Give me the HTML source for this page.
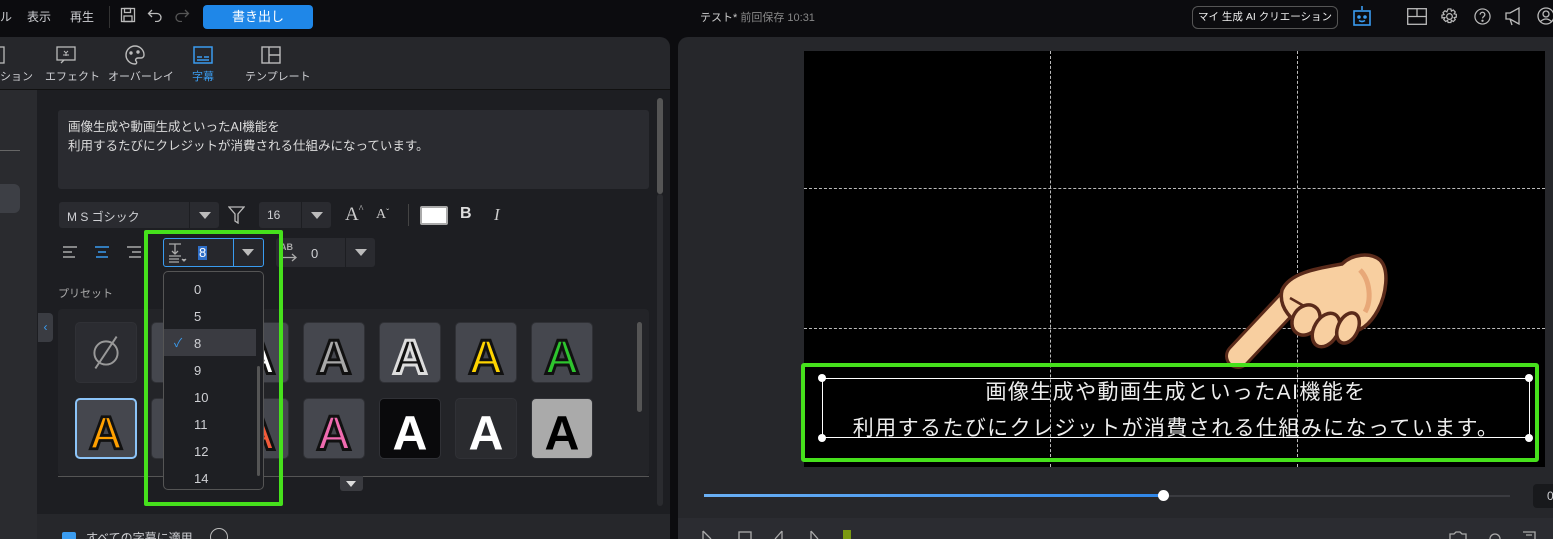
<!DOCTYPE html>
<html><head><meta charset="utf-8">
<style>
*{margin:0;padding:0;box-sizing:border-box}
html,body{width:1553px;height:539px;overflow:hidden}
body{background:#0c0c0f;font-family:"Liberation Sans","Noto Sans CJK JP",sans-serif;color:#ddd;position:relative}
.a{position:absolute}
.t{font-size:12px;color:#cfd0d4;white-space:nowrap}
.box{background:#2a2b30;border-radius:3px}
.tile{position:absolute;width:62px;height:61px;border-radius:5px;background:#45474e;border:1px solid #303136}
.tile svg{width:100%;height:100%}
</style></head><body>
<!-- top bar -->
<div class="a t" style="left:0;top:8px;font-size:12px">ル</div>
<div class="a t" style="left:27px;top:8px">表示</div>
<div class="a t" style="left:70px;top:8px">再生</div>
<div class="a" style="left:109px;top:6px;width:1px;height:22px;background:#333"></div>
<svg class="a" style="left:120px;top:7px" width="16" height="16" viewBox="0 0 16 16" fill="none" stroke="#bbb" stroke-width="1.3"><rect x="1.5" y="1.5" width="13" height="13"/><rect x="4.5" y="1.5" width="6" height="4"/><rect x="4" y="9" width="8" height="5.5"/></svg>
<svg class="a" style="left:147px;top:8px" width="16" height="14" viewBox="0 0 16 14" fill="none" stroke="#bbb" stroke-width="1.3"><path d="M5 2L1.5 5.5 5 9M1.5 5.5H10a4 4 0 010 8H8"/></svg>
<svg class="a" style="left:174px;top:8px" width="16" height="14" viewBox="0 0 16 14" fill="none" stroke="#555" stroke-width="1.3"><path d="M11 2l3.5 3.5L11 9M14.5 5.5H6a4 4 0 000 8h2"/></svg>
<div class="a" style="left:203px;top:5px;width:110px;height:24px;background:#1f87e8;border-radius:4px;color:#fff;font-size:13px;text-align:center;line-height:24px">書き出し</div>
<div class="a t" style="left:700px;top:9px;font-size:11px;color:#ccc">テスト* <span style="color:#888">前回保存 10:31</span></div>
<div class="a" style="left:1192px;top:6px;width:146px;height:23px;border:1px solid #555;border-radius:6px;font-size:10.5px;color:#eee;text-align:center;line-height:21px;white-space:nowrap;overflow:hidden">マイ 生成 AI クリエーション</div>
<svg class="a" style="left:1352px;top:5px" width="20" height="22" viewBox="0 0 20 22" fill="none" stroke="#3a9cf0" stroke-width="1.6"><path d="M10 1v4"/><rect x="2" y="6" width="16" height="14"/><circle cx="7" cy="12" r="1" fill="#3a9cf0"/><circle cx="13" cy="12" r="1" fill="#3a9cf0"/><path d="M7 15.5q3 2 6 0"/></svg>
<svg class="a" style="left:1407px;top:8px" width="20" height="17" viewBox="0 0 20 17" fill="none" stroke="#bbb" stroke-width="1.3"><rect x="0.7" y="0.7" width="18.6" height="15.6"/><path d="M0.7 8.5h18.6M10 0.7v7.8"/></svg>
<svg class="a" style="left:1441px;top:8px" width="17" height="17" viewBox="0 0 18 18" fill="none" stroke="#bbb" stroke-width="1.3"><circle cx="9" cy="9" r="3"/><path d="M7.5 1h3l.5 2.3 2-1.2 2.1 2.1-1.2 2 2.3.5v3l-2.3.5 1.2 2-2.1 2.1-2-1.2-.5 2.3h-3l-.5-2.3-2 1.2-2.1-2.1 1.2-2L1 10.5v-3l2.3-.5-1.2-2 2.1-2.1 2 1.2z"/></svg>
<svg class="a" style="left:1474px;top:8px" width="17" height="17" viewBox="0 0 18 18" fill="none" stroke="#bbb" stroke-width="1.3"><circle cx="9" cy="9" r="8"/><path d="M6.5 7a2.5 2.5 0 115 0c0 2-2.5 2-2.5 4"/><circle cx="9" cy="13.5" r=".6" fill="#bbb"/></svg>
<svg class="a" style="left:1504px;top:7px" width="20" height="19" viewBox="0 0 20 19" fill="none" stroke="#bbb" stroke-width="1.3"><path d="M2 6h4l9-5v16l-9-5H2zM6 12l2 6"/></svg>
<svg class="a" style="left:1537px;top:7px" width="18" height="18" viewBox="0 0 18 18" fill="none" stroke="#bbb" stroke-width="1.3"><circle cx="9" cy="9" r="8"/><circle cx="9" cy="7" r="3"/><path d="M3.5 14.5q5.5-5 11 0"/></svg>

<!-- left panel -->
<div class="a" style="left:0;top:37px;width:670px;height:502px;background:#26272b;border-radius:0 10px 0 0"></div>
<div class="a" style="left:0;top:89px;width:670px;height:1px;background:#111"></div>
<div class="a" style="left:0;top:90px;width:37px;height:449px;background:#2a2b2f"></div>
<div class="a" style="left:0;top:150px;width:20px;height:1px;background:#666"></div>
<div class="a" style="left:0;top:184px;width:20px;height:29px;background:#3d3f45;border-radius:0 6px 6px 0"></div>
<div class="a" style="left:37px;top:90px;width:633px;height:424px;background:#1d1e22"></div>
<div class="a" style="left:37px;top:514px;width:633px;height:25px;background:#26272b"></div>
<!-- tabs -->
<svg class="a" style="left:0;top:46px" width="6" height="18"><rect x="-6" y="1" width="10" height="16" fill="none" stroke="#bbb" stroke-width="1.3"/></svg>
<div class="a t" style="left:0;top:68px;font-size:11px">ション</div>
<svg class="a" style="left:56px;top:46px" width="20" height="18" viewBox="0 0 20 18" fill="none" stroke="#bbb" stroke-width="1.3"><rect x="1" y="1" width="18" height="13"/><path d="M5 17l3-3"/><path d="M8 5l2 2 2-2M10 7v3M7 9h6" stroke-width="1"/></svg>
<div class="a t" style="left:45px;top:68px;font-size:11px">エフェクト</div>
<svg class="a" style="left:125px;top:45px" width="20" height="20" viewBox="0 0 20 20" fill="none" stroke="#bbb" stroke-width="1.4"><path d="M10 1a9 9 0 100 18c2 0 2-2 1-3s0-3 2-3h3a3 3 0 003-3 9 9 0 00-9-9z"/><circle cx="6" cy="8" r="1" fill="#bbb"/><circle cx="13" cy="7" r="1" fill="#bbb"/></svg>
<div class="a t" style="left:108px;top:68px;font-size:11px">オーバーレイ</div>
<svg class="a" style="left:193px;top:46px" width="20" height="18" viewBox="0 0 20 18" fill="none" stroke="#3a9cf0" stroke-width="1.5"><rect x="1" y="1" width="18" height="16"/><path d="M4 11h5M11 11h5M4 14h12"/></svg>
<div class="a t" style="left:192px;top:68px;font-size:11px;color:#3a9cf0">字幕</div>
<svg class="a" style="left:261px;top:46px" width="20" height="18" viewBox="0 0 20 18" fill="none" stroke="#bbb" stroke-width="1.4"><rect x="1" y="1" width="18" height="16"/><path d="M8 1v16M8 9h11"/></svg>
<div class="a t" style="left:245px;top:68px;font-size:11px">テンプレート</div>
<!-- scrollbar -->
<div class="a" style="left:657px;top:98px;width:6px;height:96px;background:#555;border-radius:3px"></div>
<div class="a" style="left:657px;top:194px;width:6px;height:312px;background:#2a2b2f;border-radius:3px"></div>
<!-- textarea -->
<div class="a box" style="left:58px;top:110px;width:591px;height:79px"></div>
<div class="a" style="left:68px;top:118px;font-size:12.5px;line-height:19px;color:#ddd">画像生成や動画生成といったAI機能を<br>利用するたびにクレジットが消費される仕組みになっています。</div>
<!-- font row -->
<div class="a box" style="left:59px;top:202px;width:160px;height:26px"></div>
<div class="a" style="left:189px;top:202px;width:1px;height:26px;background:#1d1e22"></div>
<div class="a t" style="left:67px;top:208px;font-size:12px">M S ゴシック</div>
<div class="a" style="left:199px;top:212px;border:6px solid transparent;border-top:7px solid #bbb;border-bottom:0"></div>
<svg class="a" style="left:228px;top:206px" width="17" height="18" viewBox="0 0 17 18" fill="none" stroke="#bbb" stroke-width="1.3"><path d="M1 1h15l-6 7v9l-3-2V8z"/></svg>
<div class="a box" style="left:259px;top:202px;width:72px;height:26px"></div>
<div class="a" style="left:301px;top:202px;width:1px;height:26px;background:#1d1e22"></div>
<div class="a t" style="left:267px;top:208px">16</div>
<div class="a" style="left:311px;top:212px;border:6px solid transparent;border-top:7px solid #bbb;border-bottom:0"></div>
<div class="a" style="left:345px;top:204px;font-family:'Liberation Serif',serif;font-size:19px;color:#ccc">A<span style="font-size:10px;vertical-align:top">^</span></div>
<div class="a" style="left:376px;top:207px;font-family:'Liberation Serif',serif;font-size:14px;color:#ccc">A<span style="font-size:9px;vertical-align:top">ˇ</span></div>
<div class="a" style="left:408px;top:204px;width:1px;height:22px;background:#444"></div>
<div class="a" style="left:420px;top:206px;width:28px;height:19px;border:2px solid #aaa;background:#fff;border-radius:2px"></div>
<div class="a" style="left:460px;top:205px;font-size:16px;color:#ddd;font-weight:bold">B</div>
<div class="a" style="left:494px;top:205px;font-family:'Liberation Serif',serif;font-size:17px;color:#ccc;font-style:italic">I</div>
<!-- align row -->
<svg class="a" style="left:62px;top:245px" width="16" height="14" stroke="#aaa" stroke-width="1.5"><path d="M1 2h14M1 7h9M1 12h12"/></svg>
<svg class="a" style="left:94px;top:245px" width="16" height="14" stroke="#3a9cf0" stroke-width="1.5"><path d="M1 2h14M4 7h8M2 12h12"/></svg>
<svg class="a" style="left:126px;top:245px" width="16" height="14" stroke="#aaa" stroke-width="1.5"><path d="M1 2h14M6 7h9M3 12h12"/></svg>
<div class="a" style="left:163px;top:238px;width:101px;height:29px;border:1px solid #3a9cf0;border-radius:3px;background:#26272c"></div>
<div class="a" style="left:233px;top:239px;width:1px;height:27px;background:#3a9cf0"></div>
<svg class="a" style="left:168px;top:242px" width="20" height="22" stroke="#aaa" stroke-width="1.3" fill="none"><path d="M1 2h12M7 2v10M4 9l3 3 3-3M1 14h12M1 17h10M1 20h10"/><path d="M14 17l2 2 2-2" fill="#aaa"/></svg>
<div class="a" style="left:198px;top:246px;font-size:13px;background:#2f6fc8;color:#fff;line-height:14px;padding:0 1px">8</div>
<div class="a" style="left:242px;top:249px;border:6px solid transparent;border-top:7px solid #bbb;border-bottom:0"></div>
<div class="a box" style="left:276px;top:238px;width:99px;height:29px"></div>
<div class="a" style="left:345px;top:238px;width:1px;height:29px;background:#1d1e22"></div>
<div class="a" style="left:280px;top:242px;font-size:9px;color:#aaa;font-weight:bold">AB</div>
<svg class="a" style="left:280px;top:253px" width="18" height="9" stroke="#aaa" stroke-width="1.3" fill="none"><path d="M0 4.5h16M12 1l4 3.5-4 3.5"/></svg>
<div class="a t" style="left:311px;top:246px;font-size:13px">0</div>
<div class="a" style="left:355px;top:249px;border:6px solid transparent;border-top:7px solid #bbb;border-bottom:0"></div>
<div class="a t" style="left:58px;top:285px;font-size:11px;color:#aaa">プリセット</div>
<!-- presets -->
<div class="a" style="left:58px;top:309px;width:591px;height:167px;background:#232428;border-radius:4px"></div>
<div class="a" style="left:58px;top:476px;width:591px;height:1px;background:#555"></div>
<div class="a" style="left:340px;top:476px;width:23px;height:15px;background:#3a3b40;border-radius:0 0 3px 3px"></div>
<div class="a" style="left:346px;top:481px;border:5px solid transparent;border-top:6px solid #ddd;border-bottom:0"></div>
<div class="a" style="left:38px;top:313px;width:15px;height:29px;background:#3a3c42;border-radius:0 4px 4px 0;color:#3a9cf0;font-size:12px;text-align:center;line-height:29px">‹</div>
<div class="a" style="left:637px;top:322px;width:5px;height:90px;background:#555;border-radius:3px"></div>
<div class="tile" style="left:75px;top:322px;background:#2b2c31"><svg viewBox="0 0 62 61"><circle cx="31" cy="31" r="12" fill="none" stroke="#999" stroke-width="2"/><path d="M20 47L42 14" stroke="#999" stroke-width="2"/></svg></div>
<div class="tile" style="left:151px;top:322px"></div>
<div class="tile" style="left:227px;top:322px"><svg viewBox="0 0 62 61"><text x="31" y="52" text-anchor="middle" font-family="Liberation Sans" font-weight="bold" font-size="50" fill="#fff" stroke="#111" stroke-width="3">A</text></svg></div>
<div class="tile" style="left:303px;top:322px"><svg viewBox="0 0 62 61"><text x="31" y="52" text-anchor="middle" font-family="Liberation Sans" font-weight="bold" font-size="50" fill="#a8a8a8" stroke="#111" stroke-width="3">A</text></svg></div>
<div class="tile" style="left:379px;top:322px"><svg viewBox="0 0 62 61"><text x="31" y="52" text-anchor="middle" font-family="Liberation Sans" font-weight="bold" font-size="50" fill="#111" stroke="#ddd" stroke-width="3">A</text></svg></div>
<div class="tile" style="left:455px;top:322px"><svg viewBox="0 0 62 61"><text x="31" y="52" text-anchor="middle" font-family="Liberation Sans" font-weight="bold" font-size="50" fill="#ffd400" stroke="#111" stroke-width="3">A</text></svg></div>
<div class="tile" style="left:531px;top:322px"><svg viewBox="0 0 62 61"><text x="31" y="52" text-anchor="middle" font-family="Liberation Sans" font-weight="bold" font-size="50" fill="#2ec52e" stroke="#111" stroke-width="3">A</text></svg></div>
<div class="tile" style="left:75px;top:398px;border:2px solid #8cc4f8"><svg viewBox="0 0 62 61"><text x="31" y="52" text-anchor="middle" font-family="Liberation Sans" font-weight="bold" font-size="50" fill="#ffa000" stroke="#111" stroke-width="3">A</text></svg></div>
<div class="tile" style="left:151px;top:398px"></div>
<div class="tile" style="left:227px;top:398px"><svg viewBox="0 0 62 61"><text x="31" y="52" text-anchor="middle" font-family="Liberation Sans" font-weight="bold" font-size="50" fill="#f05a3a" stroke="#111" stroke-width="3">A</text></svg></div>
<div class="tile" style="left:303px;top:398px"><svg viewBox="0 0 62 61"><text x="31" y="52" text-anchor="middle" font-family="Liberation Sans" font-weight="bold" font-size="50" fill="#f06bb0" stroke="#111" stroke-width="3">A</text></svg></div>
<div class="tile" style="left:379px;top:398px;background:#0a0a0c"><svg viewBox="0 0 62 61"><text x="31" y="52" text-anchor="middle" font-family="Liberation Sans" font-weight="bold" font-size="50" fill="#fff">A</text></svg></div>
<div class="tile" style="left:455px;top:398px;background:#2a2b2f"><svg viewBox="0 0 62 61"><text x="31" y="52" text-anchor="middle" font-family="Liberation Sans" font-weight="bold" font-size="50" fill="#fff">A</text></svg></div>
<div class="tile" style="left:531px;top:398px;background:#aaa"><svg viewBox="0 0 62 61"><text x="31" y="52" text-anchor="middle" font-family="Liberation Sans" font-weight="bold" font-size="50" fill="#000">A</text></svg></div>
<!-- dropdown list -->
<div class="a" style="left:163px;top:271px;width:101px;height:219px;background:#1e1f23;border:1px solid #555;border-radius:5px"></div>
<div class="a" style="left:164px;top:329px;width:92px;height:27px;background:#3a3b41"></div>
<div class="a" style="left:257px;top:366px;width:3px;height:110px;background:#555;border-radius:2px"></div>
<div class="a" style="left:174px;top:334px;color:#3a9cf0;font-size:12px">✓</div>
<div class="a t" style="left:194px;top:276px;font-size:13px;line-height:27px">0<br>5<br>8<br>9<br>10<br>11<br>12<br>14</div>
<!-- green box left -->
<div class="a" style="left:144px;top:230px;width:139px;height:276px;border:4px solid #46e11c;border-radius:2px"></div>
<!-- bottom checkbox -->
<div class="a" style="left:62px;top:532px;width:14px;height:14px;background:#3a9cf0;border-radius:2px"></div>
<div class="a t" style="left:86px;top:529px">すべての字幕に適用</div>
<div class="a" style="left:210px;top:528px;width:18px;height:18px;border:1.3px solid #bbb;border-radius:50%"></div>

<!-- right panel -->
<div class="a" style="left:678px;top:37px;width:875px;height:502px;background:#26272b;border-radius:10px 0 0 0"></div>
<div class="a" style="left:678px;top:518px;width:875px;height:21px;background:#2b2c31"></div>
<div class="a" style="left:804px;top:51px;width:741px;height:416px;background:#000"></div>
<div class="a" style="left:1050px;top:51px;width:0;height:416px;border-left:1px dashed #bbb"></div>
<div class="a" style="left:1297px;top:51px;width:0;height:416px;border-left:1px dashed #bbb"></div>
<div class="a" style="left:804px;top:188px;width:741px;height:0;border-top:1px dashed #bbb"></div>
<div class="a" style="left:804px;top:328px;width:741px;height:0;border-top:1px dashed #bbb"></div>
<!-- hand -->
<svg class="a" style="left:1220px;top:250px" width="170" height="120" viewBox="0 0 170 120">
<path d="M18 106L80 40" stroke="#5a2a1a" stroke-width="26" stroke-linecap="round"/>
<path d="M18 106L80 40" stroke="#f8cfa0" stroke-width="20" stroke-linecap="round"/>
<path d="M62 40C70 22 100 18 122 14C132 4 150 2 160 10C170 20 166 45 158 60C150 75 140 82 125 84L90 80C72 72 58 58 62 40Z" fill="#f8cfa0" stroke="#5a2a1a" stroke-width="3.5"/>
<ellipse cx="86" cy="70" rx="13" ry="16" transform="rotate(35 86 70)" fill="#f8cfa0" stroke="#5a2a1a" stroke-width="3.5"/>
<ellipse cx="106" cy="80" rx="12" ry="18" transform="rotate(30 106 80)" fill="#f8cfa0" stroke="#5a2a1a" stroke-width="3.5"/>
<ellipse cx="128" cy="78" rx="10" ry="16" transform="rotate(25 128 78)" fill="#f8cfa0" stroke="#5a2a1a" stroke-width="3.5"/>
<path d="M140 20C150 30 152 50 145 62" fill="none" stroke="#e8a878" stroke-width="5"/>
<path d="M70 48l14 8" fill="none" stroke="#5a2a1a" stroke-width="2.5"/>
</svg>
<!-- subtitle -->
<div class="a" style="left:801px;top:363px;width:738px;height:99px;border:4px solid #46e11c;border-radius:3px"></div>
<div class="a" style="left:822px;top:378px;width:708px;height:60px;border:1px solid #fff"></div>
<div class="a" style="left:818px;top:374px;width:8px;height:8px;background:#fff;border-radius:50%"></div>
<div class="a" style="left:1525px;top:374px;width:8px;height:8px;background:#fff;border-radius:50%"></div>
<div class="a" style="left:818px;top:434px;width:8px;height:8px;background:#fff;border-radius:50%"></div>
<div class="a" style="left:1525px;top:434px;width:8px;height:8px;background:#fff;border-radius:50%"></div>
<div class="a" style="left:822px;top:375px;width:708px;text-align:center;font-size:21px;line-height:36px;color:#eee;white-space:nowrap;letter-spacing:1.4px">画像生成や動画生成といったAI機能を<br>利用するたびにクレジットが消費される仕組みになっています。</div>
<!-- slider -->
<div class="a" style="left:704px;top:495px;width:806px;height:2px;background:#3a3b40"></div>
<div class="a" style="left:704px;top:494px;width:459px;height:3px;background:linear-gradient(90deg,#6ab0f5,#2f86e8)"></div>
<div class="a" style="left:1158px;top:490px;width:11px;height:11px;background:#fff;border-radius:50%"></div>
<div class="a" style="left:1533px;top:484px;width:25px;height:24px;background:#18191c;border-radius:4px"></div>
<div class="a t" style="left:1547px;top:489px">0</div>
<!-- bottom controls -->
<svg class="a" style="left:700px;top:530px" width="160" height="9" stroke="#aaa" stroke-width="1.3" fill="none"><path d="M3 1l8 8M3 1v8"/><rect x="39" y="2" width="12" height="8"/><path d="M82 1l-7 8M82 1v8M111 1l7 8M111 1v8"/><rect x="143" y="0" width="8" height="9" fill="#7a9a10" stroke="none"/></svg>
<svg class="a" style="left:1448px;top:530px" width="100" height="9" stroke="#aaa" stroke-width="1.3" fill="none"><path d="M2 9V4h4l2-2h4l2 2h4v5M42 9a5 5 0 0110 0M75 2h12v7M78 5h6"/></svg>
</body></html>
